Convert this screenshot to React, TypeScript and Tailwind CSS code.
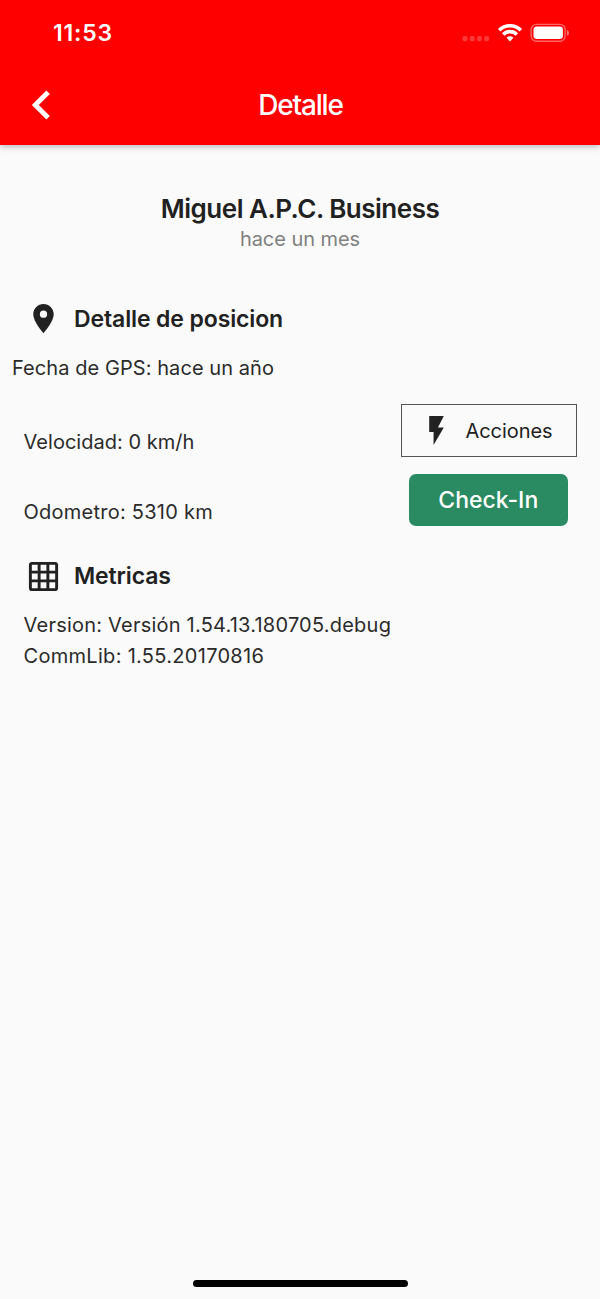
import React from 'react';
import { MdFlashOn, MdGridOn, MdLocationOn } from 'react-icons/md';

const StatusBar: React.FC = () => (
  <div className="flex h-[65px] items-start justify-between pl-[53px] pr-[31px] text-white">
    <span className="mt-[19px] text-[23px] leading-[28px] font-semibold tracking-[0.8px]">11:53</span>
    <svg width="108" height="20" viewBox="0 0 108 20" className="mt-[23px]" fill="none">
      <g fill="white" fillOpacity="0.22">
        <rect x="1.5" y="13" width="5" height="5.2" rx="1.6" />
        <rect x="8.7" y="13" width="5" height="5.2" rx="1.6" />
        <rect x="15.9" y="13" width="5" height="5.2" rx="1.6" />
        <rect x="23.1" y="13" width="5" height="5.2" rx="1.6" />
      </g>
      <g stroke="white" strokeWidth="3.6">
        <path d="M38.2 7.2a15.2 15.2 0 0 1 21.6 0" />
        <path d="M42.2 11.4a9.6 9.6 0 0 1 13.6 0" />
      </g>
      <path d="M49 18.4l-3.400-3.700a4.900 4.900 0 0 1 6.800 0z" fill="white" />
      <rect x="70.2" y="1.4" width="34" height="16.8" rx="5.2" stroke="white" strokeOpacity="0.4" strokeWidth="1.4" />
      <rect x="72.5" y="3.6" width="29.4" height="12.4" rx="3.2" fill="white" />
      <path d="M106 7v5.8c1.2-.5 2-1.6 2-2.9s-.8-2.400-2-2.900z" fill="white" fillOpacity="0.45" />
    </svg>
  </div>
);

interface SectionTitleProps {
  icon: React.ReactNode;
  children: React.ReactNode;
}

const SectionTitle: React.FC<SectionTitleProps> = ({ icon, children }) => (
  <div className="flex h-[35px] items-center gap-[13px] pl-[26px]">
    {icon}
    <h2 className="pt-px text-[23px] font-semibold tracking-[-0.12px]">{children}</h2>
  </div>
);

export default function App() {
  return (
    <div className="flex h-[1299px] w-[600px] flex-col bg-[#fafafa] font-['Inter',sans-serif] text-[#212121]">
      <header className="h-[145px] shrink-0 bg-[#ff0000] shadow-[0_2px_6px_rgba(0,0,0,0.25)]">
        <StatusBar />
        <div className="grid h-20 grid-cols-[1fr_auto_1fr] items-center text-white">
          <button type="button" aria-label="Volver" className="pl-[31px]">
            <svg width="20" height="30" viewBox="0 0 20 30" fill="none">
              <path d="M17.100 2.200L4.300 15l12.800 12.800" stroke="white" strokeWidth="4.900" />
            </svg>
          </button>
          <h1 className="pl-px text-[28px] font-medium tracking-[-1.2px]">Detalle</h1>
        </div>
      </header>

      <main className="flex flex-1 flex-col">
        <div className="mt-[47px] flex flex-col items-center">
          <p className="text-[26px] leading-[33px] font-semibold tracking-[-0.5px]">Miguel A.P.C. Business</p>
          <p className="text-[20px] leading-[29px] tracking-[-0.05px] text-[#808080]">hace un mes</p>
        </div>

        <div className="mt-[47px]">
          <SectionTitle icon={<MdLocationOn size={35} />}>Detalle de posicion</SectionTitle>
        </div>
        <p className="mt-[17px] pl-3 text-[20px] leading-[31px] tracking-[0.07px] text-[#2b2b2b]">
          Fecha de GPS: hace un año
        </p>

        <div className="mt-5 flex justify-between pl-[23.5px] pr-[23px]">
          <div className="mt-[23px] flex flex-col gap-10 text-[20px] leading-[30px] text-[#2b2b2b]">
            <p className="tracking-[0.03px]">Velocidad: 0 km/h</p>
            <p className="tracking-[0.25px]">Odometro: 5310 km</p>
          </div>
          <div className="flex flex-col gap-[17px]">
            <button
              type="button"
              className="flex h-[53px] w-[176px] items-center gap-[12px] border border-[#555] pl-[16.5px] text-[20px] tracking-[-0.05px]"
            >
              <MdFlashOn size={35} />
              Acciones
            </button>
            <button
              type="button"
              className="ml-[7.5px] h-[52px] w-[159.5px] rounded-[7px] bg-[#2a8a61] pt-px text-[23px] font-medium text-white"
            >
              Check-In
            </button>
          </div>
        </div>

        <div className="mt-[31.5px]">
          <SectionTitle icon={<MdGridOn size={35} />}>Metricas</SectionTitle>
        </div>
        <div className="mt-[16.5px] pl-[23.5px] text-[20px] leading-[30.5px] text-[#2b2b2b]">
          <p className="tracking-[0.22px]">Version: Versión 1.54.13.180705.debug</p>
          <p className="tracking-[0.3px]">CommLib: 1.55.20170816</p>
        </div>
      </main>

      <div className="mx-auto mb-3 h-[7px] w-[215px] rounded-full bg-black" />
    </div>
  );
}
